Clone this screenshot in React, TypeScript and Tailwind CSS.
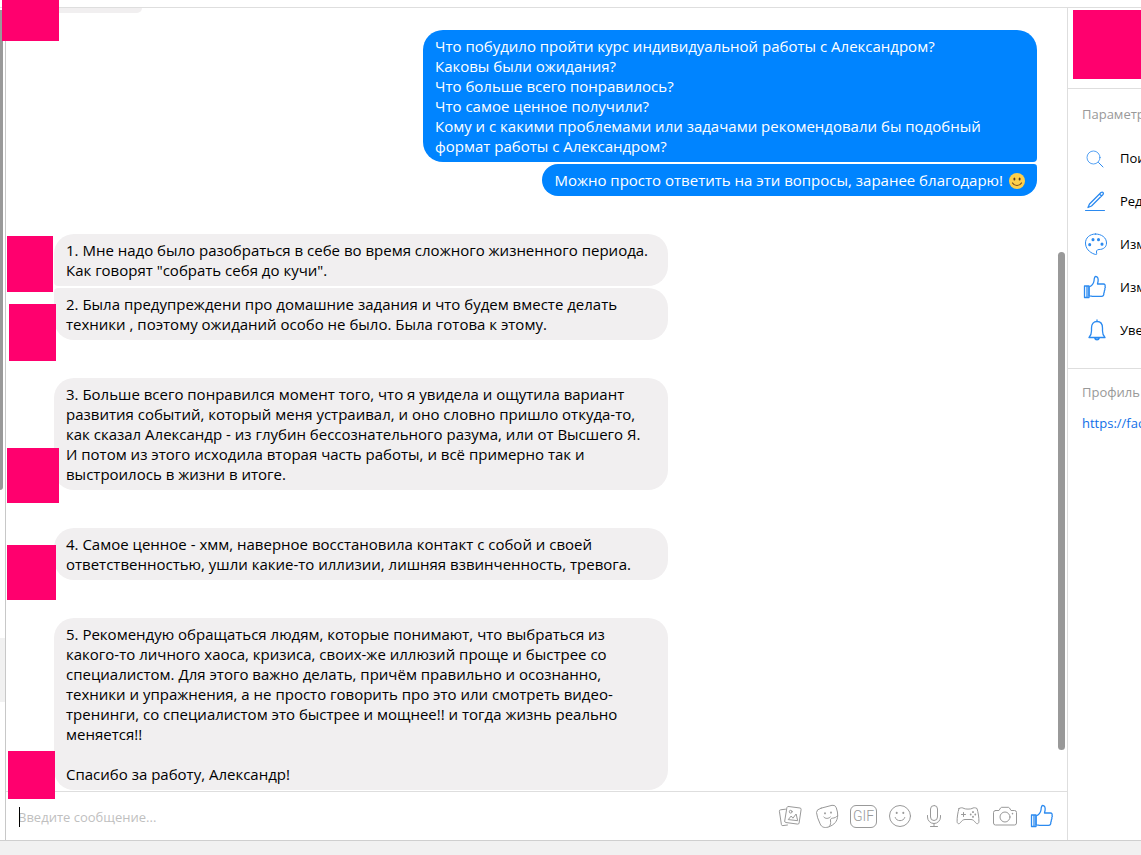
import React from 'react';
import { clsx } from 'clsx';

type Incoming = {
  text: string;
  shape: string;
  gap: string;
  cover: string;
};

const incoming: Incoming[] = [
  {
    text: '1. Мне надо было разобраться в себе во время сложного жизненного периода.\nКак говорят "собрать себя до кучи".',
    shape: 'rounded-[20px] rounded-bl',
    gap: 'mt-[38px]',
    cover: 'left-px top-0.5 h-14 w-[46px]',
  },
  {
    text: '2. Была предупреждени про домашние задания и что будем вместе делать\nтехники , поэтому ожиданий особо не было. Была готова к этому.',
    shape: 'rounded-[20px] rounded-tl',
    gap: 'mt-0.5',
    cover: 'left-[3px] top-4 h-[57px] w-[47px]',
  },
  {
    text: '3. Больше всего понравился момент того, что я увидела и ощутила вариант\nразвития событий, который меня устраивал, и оно словно пришло откуда-то,\nкак сказал Александр - из глубин бессознательного разума, или от Высшего Я.\nИ потом из этого исходила вторая часть работы, и всё примерно так и\nвыстроилось в жизни в итоге.',
    shape: 'rounded-[20px]',
    gap: 'mt-[38px]',
    cover: 'left-px top-[70px] h-[55px] w-[52px]',
  },
  {
    text: '4. Самое ценное - хмм, наверное восстановила контакт с собой и своей\nответственностью, ушли какие-то иллизии, лишняя взвинченность, тревога.',
    shape: 'rounded-[20px]',
    gap: 'mt-[38px]',
    cover: 'left-px top-[17px] h-[55px] w-[49px]',
  },
  {
    text: '5. Рекомендую обращаться людям, которые понимают, что выбраться из\nкакого-то личного хаоса, кризиса, своих-же иллюзий проще и быстрее со\nспециалистом. Для этого важно делать, причём правильно и осознанно,\nтехники и упражнения, а не просто говорить про это или смотреть видео-\nтренинги, со специалистом это быстрее и мощнее!! и тогда жизнь реально\nменяется!!\n\nСпасибо за работу, Александр!',
    shape: 'rounded-[20px]',
    gap: 'mt-[38px]',
    cover: 'left-0.5 top-[133px] h-12 w-[47px]',
  },
];

const question =
  'Что побудило пройти курс индивидуальной работы с Александром?\nКаковы были ожидания?\nЧто больше всего понравилось?\nЧто самое ценное получили?\nКому и с какими проблемами или задачами рекомендовали бы подобный\nформат работы с Александром?';

function Icon({ children, className }: { children: React.ReactNode; className?: string }) {
  return (
    <svg
      viewBox="0 0 28 28"
      className={clsx('size-7 shrink-0', className)}
      fill="none"
      stroke="currentColor"
      strokeLinecap="round"
      strokeLinejoin="round"
      aria-hidden="true"
    >
      {children}
    </svg>
  );
}

const ThumbIcon = () => (
  <Icon>
    <g strokeWidth="1.300">
      <path d="M3.500 13h4.500v11.500H3.500zM6 13v11.500" />
      <path d="M8 14c2.500-1 4.500-3 5-6 .2-2.500.3-4.500 1.700-4.500 2 0 2.700 2 2.400 4.700L16.500 11h6c1.400 0 2 1.200 1.500 2.200.5.800.4 1.700-.2 2.400.3.900.1 1.700-.5 2.300.2.900 0 1.600-.5 2.200.2 1.900-.4 3.200-2.300 3.200H12c-1.400 0-2-.5-4-.5z" />
    </g>
  </Icon>
);

const Photos = () => (
  <Icon>
    <path d="M9.500 7.200 4.600 7.800q-1.400.2-1.200 1.500l2 13.200q.2 1.300 1.500 1.100l4.600-.6" />
    <path d="M12.500 4.500 24 6q1.300.2 1.100 1.500l-2 13.500q-.2 1.300-1.500 1.100L9.800 20.500q-1.300-.2-1.100-1.500l2.200-13.400q.3-1.300 1.600-1.100z" />
    <circle cx="14.700" cy="9.700" r="1.400" />
    <path d="m12.500 17.300 2.700-3.300 1.700 2.200 3.200-4.200 1.500 6.300z" />
  </Icon>
);

const Sticker = () => (
  <Icon>
    <path d="M8 6.200 19 3.300q3.200-.7 4.300 2.500 1.600 4.600 1.400 7.700c-.3 5.800-3.200 9.300-9.500 11.600-4 1-6.700.1-8.100-3.300Q4 15.500 3.500 10.500 3.300 7.400 8 6.200z" />
    <path d="M24.600 13.500c-1.300 2-3 2.400-5.300 2.700-1.600.3-2.100 1.300-1.800 2.800.3 2 .3 3.500-1.300 5.700" />
    <path d="M10.800 15c1.200 1.900 4.700 2 6.500 0" />
    <path d="M12 11.200v.2M18 10.500v.2" strokeWidth="1.800" />
  </Icon>
);

const Smile = () => (
  <Icon>
    <circle cx="14" cy="14" r="10.500" />
    <path d="M9.200 15.500c1 4.300 8.600 4.300 9.600 0" />
    <path d="M10.700 10.700v.2M17.300 10.700v.2" strokeWidth="2" />
  </Icon>
);

const Mic = () => (
  <Icon>
    <rect x="10.500" y="3.500" width="7" height="15" rx="3.500" />
    <path d="M7.500 13.500v1.500a6.500 6.500 0 0 0 13 0v-1.500M14 21.500v3M10.500 24.500h7" />
  </Icon>
);

const Gamepad = () => (
  <Icon>
    <path d="M5 6.500c1.700-1 3.700-1 5 0 1.300.8 6.700.8 8 0 1.300-1 3.300-1 5 0 1.200 4 2 9 1.900 13-.1 2.400-1.900 2.800-3.300 1.200C20 18.500 18.700 17.500 17 17.500h-6c-1.700 0-3 1-4.600 3.200-1.400 1.600-3.200 1.200-3.300-1.200C3 15.500 3.800 10.500 5 6.500z" />
    <path d="M9.500 10.500v4M7.500 12.500h4" />
    <path d="M19 10v.2M19 14.700v.2M16.700 12.400v.2M21.300 12.400v.2" strokeWidth="1.800" />
  </Icon>
);

const Camera = () => (
  <Icon>
    <path d="M4.500 8.500H8l1.500-2.500q.5-.7 1.300-.7h6.400q.8 0 1.300.7L20 8.500h3.500q2 0 2 2v10.500q0 2-2 2h-19q-2 0-2-2V10.500q0-2 2-2z" />
    <circle cx="14" cy="15" r="5" />
    <path d="M21.500 11.500v.2" strokeWidth="1.500" />
  </Icon>
);

const Search = () => (
  <Icon>
    <circle cx="12.500" cy="13.500" r="6.500" strokeWidth=".8" />
    <path d="m17.500 18.500 4.500 4.500" />
  </Icon>
);

const Pencil = () => (
  <Icon>
    <path d="M7 20.500 8.500 17 20 5.500q1.300-.8 2 0 .8.900 0 2L10.500 19zM18.500 7l2 2" strokeWidth="1.300" />
    <path d="M4.500 23.500h19" />
  </Icon>
);

const Palette = () => (
  <Icon>
    <path d="M14.500 4C8.500 4 4.500 8 4.500 13c0 5.500 4 9.300 8.500 11 1.700.6 3 .8 2.700-.4-.6-2.200-.2-4.100 2.300-4.100 4.500 0 7.500-2.500 7.500-6.500C25.500 7.500 20.500 4 14.500 4z" />
    <path d="M8.700 14.500v.2M12 9.500v.2M17.500 9.500v.2M21 14v.2" strokeWidth="3" />
  </Icon>
);

const Bell = () => (
  <Icon>
    <g strokeWidth="1.300">
      <path d="M16 4v1.500M8 21.500c1.700-1.600 2.500-3.500 2.500-6.500v-3C10.500 8 12.700 5.500 16 5.500s5.500 2.500 5.500 6.500v3c0 3 .8 4.900 2.500 6.500z" />
      <path d="M14 22c.3 2 3.700 2 4 0" strokeWidth="1.800" />
    </g>
  </Icon>
);

function SmileEmoji() {
  return (
    <svg viewBox="0 0 16 16" className="mt-0.5 size-4 shrink-0" role="img" aria-label="улыбка">
      <circle cx="8" cy="8" r="8" fill="#ffcf4a" />
      <ellipse cx="5.400" cy="6" rx="1" ry="1.500" fill="#5b3b1c" />
      <ellipse cx="10.600" cy="6" rx="1" ry="1.500" fill="#5b3b1c" />
      <path d="M3.500 10c2 3.300 7 3.300 9 0" fill="none" stroke="#7a4a1a" strokeWidth="1.200" strokeLinecap="round" />
    </svg>
  );
}

const options = [
  { label: 'Поиск', icon: <Search /> },
  { label: 'Редактировать', icon: <Pencil /> },
  { label: 'Изменить цвет', icon: <Palette /> },
  { label: 'Изменить смайлик', icon: <ThumbIcon /> },
  { label: 'Уведомления', icon: <Bell /> },
];

function Cover({ className }: { className: string }) {
  return <div className={clsx('absolute z-10 bg-[#ff006e]', className)} />;
}

function Conversation() {
  return (
    <section className="relative flex-1">
      <Cover className="-left-1 -top-2 h-[41px] w-[57px]" />
      <div className="ml-12 h-[5px] w-[88px] rounded-b-xl bg-[#f1eff0]" />

      <div className="mt-[17px] flex flex-col items-end gap-0.5 pr-[30px] text-white">
        <p className="w-full max-w-[614px] whitespace-pre-line rounded-[20px] rounded-br bg-[#0084ff] px-3 py-1.5">
          {question}
        </p>
        <p className="flex items-center gap-1.5 rounded-[20px] rounded-tr bg-[#0084ff] px-3 py-1.5">
          Можно просто ответить на эти вопросы, заранее благодарю! <SmileEmoji />
        </p>
      </div>

      {incoming.map((message) => (
        <div key={message.text} className={clsx('relative pl-12', message.gap)}>
          <Cover className={message.cover} />
          <p className={clsx('max-w-[614px] whitespace-pre-line bg-[#f1eff0] px-3 py-1.5', message.shape)}>
            {message.text}
          </p>
        </div>
      ))}

      {/* Scroll thumb */}
      <div className="absolute bottom-10 right-0.5 h-[498px] w-[7px] rounded-full bg-[#999]" />
    </section>
  );
}

function Composer() {
  return (
    <form className="mt-px flex h-[49px] items-center border-t border-[#dedede] pl-3 pr-[11px] text-[#999]">
      <div className="relative flex flex-1 items-center pt-0.5">
        <div className="absolute left-px h-5 w-px bg-black" />
        <input
          type="text"
          aria-label="Сообщение"
          placeholder="Введите сообщение..."
          className="w-full text-[13px] text-black outline-none placeholder:text-[#bfbfbf]"
        />
      </div>
      <div className="flex items-center gap-[9px]">
        <button type="button" aria-label="Фото"><Photos /></button>
        <button type="button" aria-label="Наклейка"><Sticker /></button>
        <button
          type="button"
          className="flex h-[23px] w-[27px] items-center justify-center rounded-md border border-[#999] font-[Roboto,sans-serif] text-[14px] font-light leading-none"
        >
          GIF
        </button>
        <button type="button" aria-label="Смайлик"><Smile /></button>
        <div className="-ml-[3px] flex gap-1.5">
          <button type="button" aria-label="Голос"><Mic /></button>
          <button type="button" aria-label="Игры"><Gamepad /></button>
        </div>
        <button type="button" aria-label="Камера"><Camera /></button>
        <button type="submit" aria-label="Нравится" className="text-[#2b8af0]"><ThumbIcon /></button>
      </div>
    </form>
  );
}

function Sidebar() {
  return (
    <aside className="w-[74px] shrink-0 overflow-hidden whitespace-nowrap border-l border-[#dedede] text-[13px]">
      <div className="border-b border-[#dedede] pb-[9px] pl-[5px] pt-0.5">
        <div className="h-[69px] bg-[#ff006e]" />
      </div>
      <div className="border-b border-[#dedede] pb-[17px] pt-[15px]">
        <h2 className="pl-3.5 text-[#999]">Параметры</h2>
        <ul className="mt-3">
          {options.map((option) => (
            <li key={option.label}>
              <button type="button" className="flex h-[43px] items-center gap-[11px] pl-[13px]">
                <span className="text-[#2b8af0]">{option.icon}</span>
                {option.label}
              </button>
            </li>
          ))}
        </ul>
      </div>
      <div className="pl-3.5 pt-[13px]">
        <h2 className="text-[#999]">Профиль Facebook</h2>
        <a href="https://facebook.com" className="mt-[11px] block text-[#0f6fe8]">
          https://facebook.com
        </a>
      </div>
    </aside>
  );
}

export default function App() {
  return (
    <div className="flex min-h-screen flex-col bg-white font-['Open_Sans','Noto_Sans',sans-serif] text-[15px] leading-5 text-black">
      <header className="h-2 border-b border-[#dedede]" />
      <main className="flex flex-1">
        <div className="w-1.5 shrink-0 border-r border-[#c8c8c8]">
          <div className="mt-0.5 h-[480px] w-[3px] rounded-br bg-[#999]" />
          <div className="mt-[148px] h-16 bg-[#f1f1f1]" />
        </div>
        <div className="flex min-w-0 flex-1 flex-col">
          <Conversation />
          <Composer />
        </div>
        <Sidebar />
      </main>
      <footer className="h-[15px] border-t border-[#cfcfcf] bg-[#f1f1f1]" />
    </div>
  );
}
